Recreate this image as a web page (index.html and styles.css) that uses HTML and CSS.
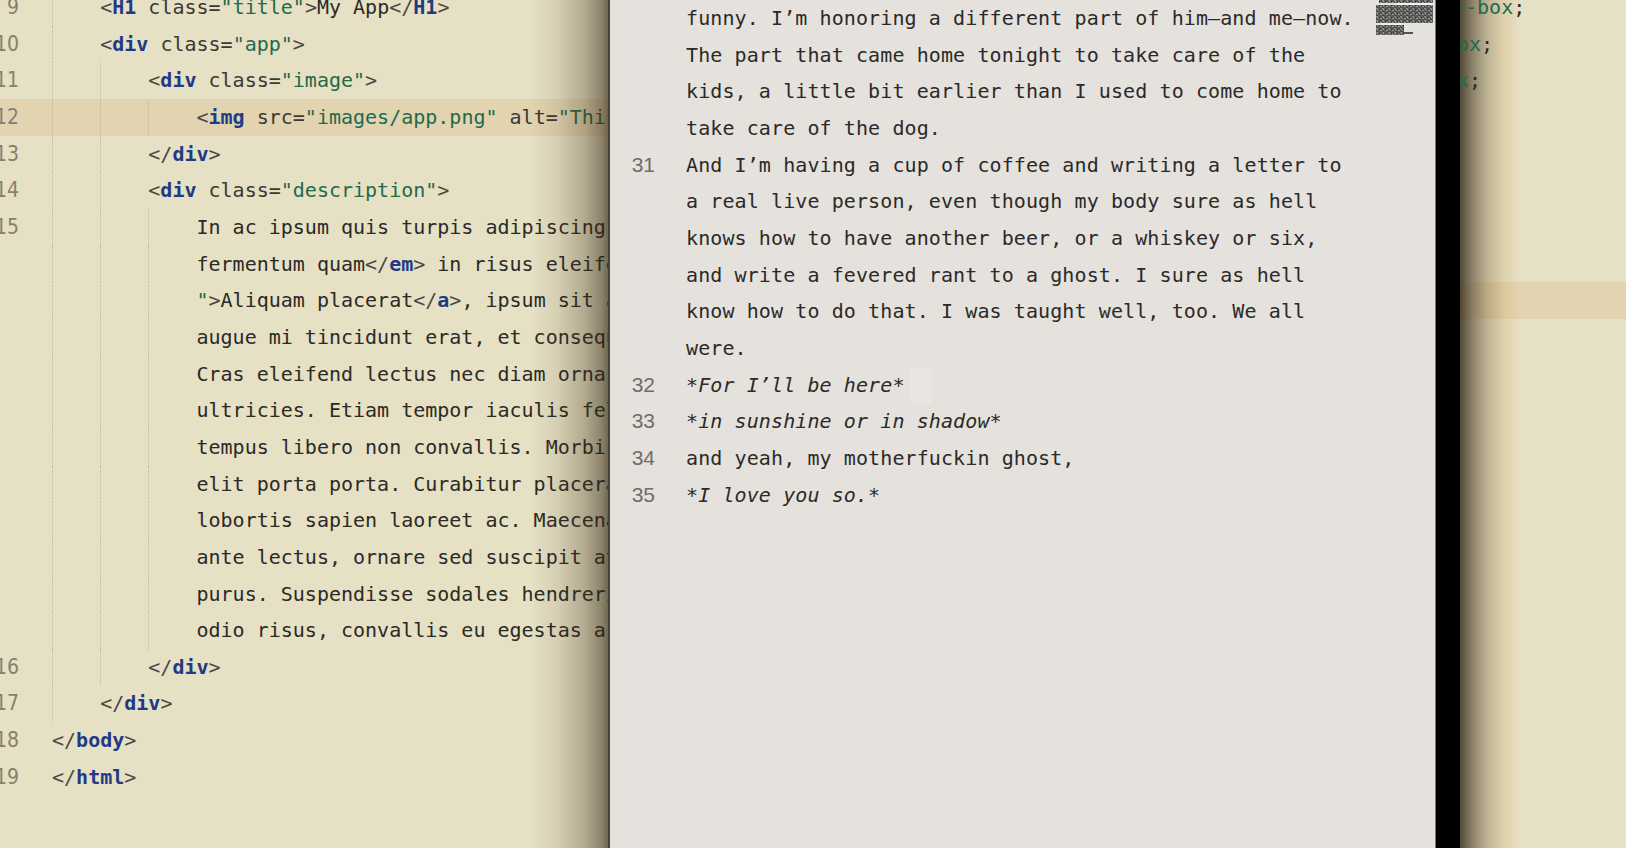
FILE: index.html
```html
<!DOCTYPE html>
<html lang="en">
<head>
<meta charset="utf-8">
<title>Editor and writer</title>
<link rel="stylesheet" href="styles.css">
</head>
<body>
<div class="stage">
  <section class="code code-left">
    <div class="lines">
      <div class="row"><span class="num">9</span><span class="ind"></span><span class="c"><span class="p">&lt;</span><span class="t">H1</span> <span class="a">class=</span><span class="s">"title"</span><span class="p">&gt;</span>My App<span class="p">&lt;/</span><span class="t">H1</span><span class="p">&gt;</span></span></div>
      <div class="row"><span class="num">10</span><span class="ind"></span><span class="c"><span class="p">&lt;</span><span class="t">div</span> <span class="a">class=</span><span class="s">"app"</span><span class="p">&gt;</span></span></div>
      <div class="row"><span class="num">11</span><span class="ind"></span><span class="ind"></span><span class="c"><span class="p">&lt;</span><span class="t">div</span> <span class="a">class=</span><span class="s">"image"</span><span class="p">&gt;</span></span></div>
      <div class="row cur"><span class="num">12</span><span class="ind"></span><span class="ind"></span><span class="ind"></span><span class="c"><span class="p">&lt;</span><span class="t">img</span> <span class="a">src=</span><span class="s">"images/app.png"</span> <span class="a">alt=</span><span class="s">"This is my app"</span><span class="p">&gt;</span></span></div>
      <div class="row"><span class="num">13</span><span class="ind"></span><span class="ind"></span><span class="c"><span class="p">&lt;/</span><span class="t">div</span><span class="p">&gt;</span></span></div>
      <div class="row"><span class="num">14</span><span class="ind"></span><span class="ind"></span><span class="c"><span class="p">&lt;</span><span class="t">div</span> <span class="a">class=</span><span class="s">"description"</span><span class="p">&gt;</span></span></div>
      <div class="row"><span class="num">15</span><span class="ind"></span><span class="ind"></span><span class="ind"></span><span class="c">In ac ipsum quis turpis adipiscing elit. <span class="p">&lt;</span><span class="t">em</span><span class="p">&gt;</span>Donec</span></div>
      <div class="row"><span class="num"></span><span class="ind"></span><span class="ind"></span><span class="ind"></span><span class="c">fermentum quam<span class="p">&lt;/</span><span class="t">em</span><span class="p">&gt;</span> in risus eleifend, <span class="p">&lt;</span><span class="t">a</span> <span class="a">href=</span><span class="s">"#</span></span></div>
      <div class="row"><span class="num"></span><span class="ind"></span><span class="ind"></span><span class="ind"></span><span class="c"><span class="s">"</span><span class="p">&gt;</span>Aliquam placerat<span class="p">&lt;/</span><span class="t">a</span><span class="p">&gt;</span>, ipsum sit amet</span></div>
      <div class="row"><span class="num"></span><span class="ind"></span><span class="ind"></span><span class="ind"></span><span class="c">augue mi tincidunt erat, et consequat</span></div>
      <div class="row"><span class="num"></span><span class="ind"></span><span class="ind"></span><span class="ind"></span><span class="c">Cras eleifend lectus nec diam ornare</span></div>
      <div class="row"><span class="num"></span><span class="ind"></span><span class="ind"></span><span class="ind"></span><span class="c">ultricies. Etiam tempor iaculis felis</span></div>
      <div class="row"><span class="num"></span><span class="ind"></span><span class="ind"></span><span class="ind"></span><span class="c">tempus libero non convallis. Morbi</span></div>
      <div class="row"><span class="num"></span><span class="ind"></span><span class="ind"></span><span class="ind"></span><span class="c">elit porta porta. Curabitur placerat</span></div>
      <div class="row"><span class="num"></span><span class="ind"></span><span class="ind"></span><span class="ind"></span><span class="c">lobortis sapien laoreet ac. Maecenas</span></div>
      <div class="row"><span class="num"></span><span class="ind"></span><span class="ind"></span><span class="ind"></span><span class="c">ante lectus, ornare sed suscipit at,</span></div>
      <div class="row"><span class="num"></span><span class="ind"></span><span class="ind"></span><span class="ind"></span><span class="c">purus. Suspendisse sodales hendrerit</span></div>
      <div class="row"><span class="num"></span><span class="ind"></span><span class="ind"></span><span class="ind"></span><span class="c">odio risus, convallis eu egestas a.</span></div>
      <div class="row"><span class="num">16</span><span class="ind"></span><span class="ind"></span><span class="c"><span class="p">&lt;/</span><span class="t">div</span><span class="p">&gt;</span></span></div>
      <div class="row"><span class="num">17</span><span class="ind"></span><span class="c"><span class="p">&lt;/</span><span class="t">div</span><span class="p">&gt;</span></span></div>
      <div class="row"><span class="num">18</span><span class="c"><span class="p">&lt;/</span><span class="t">body</span><span class="p">&gt;</span></span></div>
      <div class="row"><span class="num">19</span><span class="c"><span class="p">&lt;/</span><span class="t">html</span><span class="p">&gt;</span></span></div>
    </div>
  </section>

  <section class="writer">
    <svg class="minimap" width="57" height="37" viewBox="0 0 57 37" aria-hidden="true">
      <defs>
        <pattern id="nz" width="6" height="4" patternUnits="userSpaceOnUse">
          <rect width="6" height="4" fill="#5a5a58"/>
          <rect x="0" y="0" width="2" height="1" fill="#8a8a88"/>
          <rect x="3" y="1" width="1" height="1" fill="#323230"/>
          <rect x="4" y="2" width="2" height="1" fill="#959593"/>
          <rect x="1" y="3" width="1" height="1" fill="#3c3c3a"/>
          <rect x="2" y="2" width="1" height="1" fill="#787876"/>
          <rect x="5" y="0" width="1" height="1" fill="#444442"/>
          <rect x="1" y="1" width="1" height="1" fill="#a4a4a2"/>
        </pattern>
      </defs>
      <rect x="3" y="0" width="54" height="3" fill="url(#nz)"/>
      <rect x="20" y="3" width="37" height="2" fill="#f1f0ee"/>
      <rect x="0" y="5" width="57" height="18" fill="url(#nz)"/>
      <rect x="5" y="23.5" width="20" height="1.5" fill="#f1f0ee"/>
      <rect x="0" y="25" width="28" height="10" fill="url(#nz)"/>
      <rect x="28" y="32" width="9" height="2" fill="#555553"/>
    </svg>

    <div class="para"><span class="pn"></span><p>funny. I’m honoring a different part of him—and me—now.<br>The part that came home tonight to take care of the<br>kids, a little bit earlier than I used to come home to<br>take care of the dog.</p></div>
    <div class="para"><span class="pn">31</span><p>And I’m having a cup of coffee and writing a letter to<br>a real live person, even though my body sure as hell<br>knows how to have another beer, or a whiskey or six,<br>and write a fevered rant to a ghost. I sure as hell<br>know how to do that. I was taught well, too. We all<br>were.</p></div>
    <div class="para"><span class="pn">32</span><p class="em">*For I’ll be here*<span class="caret"></span></p></div>
    <div class="para"><span class="pn">33</span><p class="em">*in sunshine or in shadow*</p></div>
    <div class="para"><span class="pn">34</span><p>and yeah, my motherfuckin ghost,</p></div>
    <div class="para"><span class="pn">35</span><p class="em">*I love you so.*</p></div>
  </section>

  <div class="bar"></div>

  <section class="code code-right">
    <div class="lines">
      <div class="row"><span class="c shift"><span class="s">r-box</span>;</span></div>
      <div class="row"><span class="c shift shift-sm"><span class="s">ox</span>;</span></div>
      <div class="row"><span class="c shift shift-sm"><span class="s">x</span>;</span></div>
      <div class="row"></div>
      <div class="row"></div>
      <div class="row"></div>
      <div class="row"></div>
      <div class="row"></div>
      <div class="row cur"></div>
    </div>
  </section>
</div>
</body>
</html>
```

FILE: styles.css
```css
* { box-sizing: border-box; }

html, body {
  margin: 0;
  padding: 0;
}

body {
  width: 1626px;
  height: 848px;
  overflow: hidden;
  background: #e6e0c4;
  font-family: "DejaVu Sans Mono", "Liberation Mono", monospace;
}

.stage {
  display: flex;
  height: 848px;
}

/* ---------- code editor panes ---------- */
.code {
  position: relative;
  overflow: hidden;
  background: #e6e0c4;
  font-size: 20px;
  line-height: 36.67px;
  color: #2b2a26;
}

.code-left { flex: 0 0 608px; }
.code-right { flex: 1 1 auto; }

.lines { margin-top: -11px; }

.row {
  display: flex;
  height: 36.67px;
  white-space: pre;
}

.row.cur { background: #e2d4b1; }

.num {
  display: flex;
  justify-content: flex-end;
  flex: 0 0 19px;
  min-width: 0;
  margin-right: 33px;
  font-family: "Liberation Sans Narrow", "DejaVu Sans Condensed", "Liberation Sans", sans-serif;
  font-size: 21px;
  color: #85816e;
}

.ind {
  flex: 0 0 4ch;
  min-width: 0;
  border-left: 1px dotted #c5bc9b;
}

.c { white-space: pre; }

.shift {
  position: relative;
  z-index: 2;
  margin-left: -7px;
}

.shift-sm { margin-left: -3px; }

.t { color: #1f3a86; font-weight: bold; }
.p { color: #4a4944; }
.a { color: #3a3934; }
.s { color: #236a4a; }

.code-left::after {
  content: "";
  position: absolute;
  top: 0;
  bottom: 0;
  right: 0;
  width: 78px;
  pointer-events: none;
  background: linear-gradient(to right,
    rgba(70, 52, 24, 0) 0,
    rgba(70, 52, 24, 0.10) 35%,
    rgba(60, 45, 22, 0.30) 70%,
    rgba(50, 38, 18, 0.50) 92%,
    rgba(40, 30, 14, 0.62) 100%);
}

.code-right::before {
  content: "";
  position: absolute;
  top: 0;
  bottom: 0;
  left: 0;
  width: 60px;
  z-index: 1;
  pointer-events: none;
  background: linear-gradient(to right,
    rgba(50, 40, 25, 0.82) 0,
    rgba(70, 58, 38, 0.58) 12px,
    rgba(110, 90, 55, 0.36) 26px,
    rgba(190, 145, 70, 0.18) 44px,
    rgba(210, 160, 80, 0.08) 54px,
    rgba(210, 160, 80, 0) 60px);
}

/* ---------- writer overlay ---------- */
.writer {
  flex: 0 0 828px;
  position: relative;
  background: #e5e1dc;
  border-left: 2px solid #4b4335;
  border-right: 1px solid #77736d;
  color: #2b2a28;
  font-size: 20px;
  line-height: 36.67px;
}

.para {
  display: grid;
  grid-template-columns: 45px 1fr;
  column-gap: 31px;
}

.pn {
  text-align: right;
  font-family: "Liberation Sans", Arial, sans-serif;
  font-size: 21px;
  color: #6f6d69;
}

.para p {
  margin: 0;
  white-space: nowrap;
  letter-spacing: 0.1px;
}

.em { font-style: italic; }

.caret {
  display: inline-block;
  width: 23px;
  height: 35px;
  margin-left: 4px;
  margin-top: 1px;
  vertical-align: top;
  background: #e9e6e2;
}

.minimap {
  position: absolute;
  top: 0;
  right: 2px;
}

.bar {
  flex: 0 0 24px;
  background: #000;
}
```
